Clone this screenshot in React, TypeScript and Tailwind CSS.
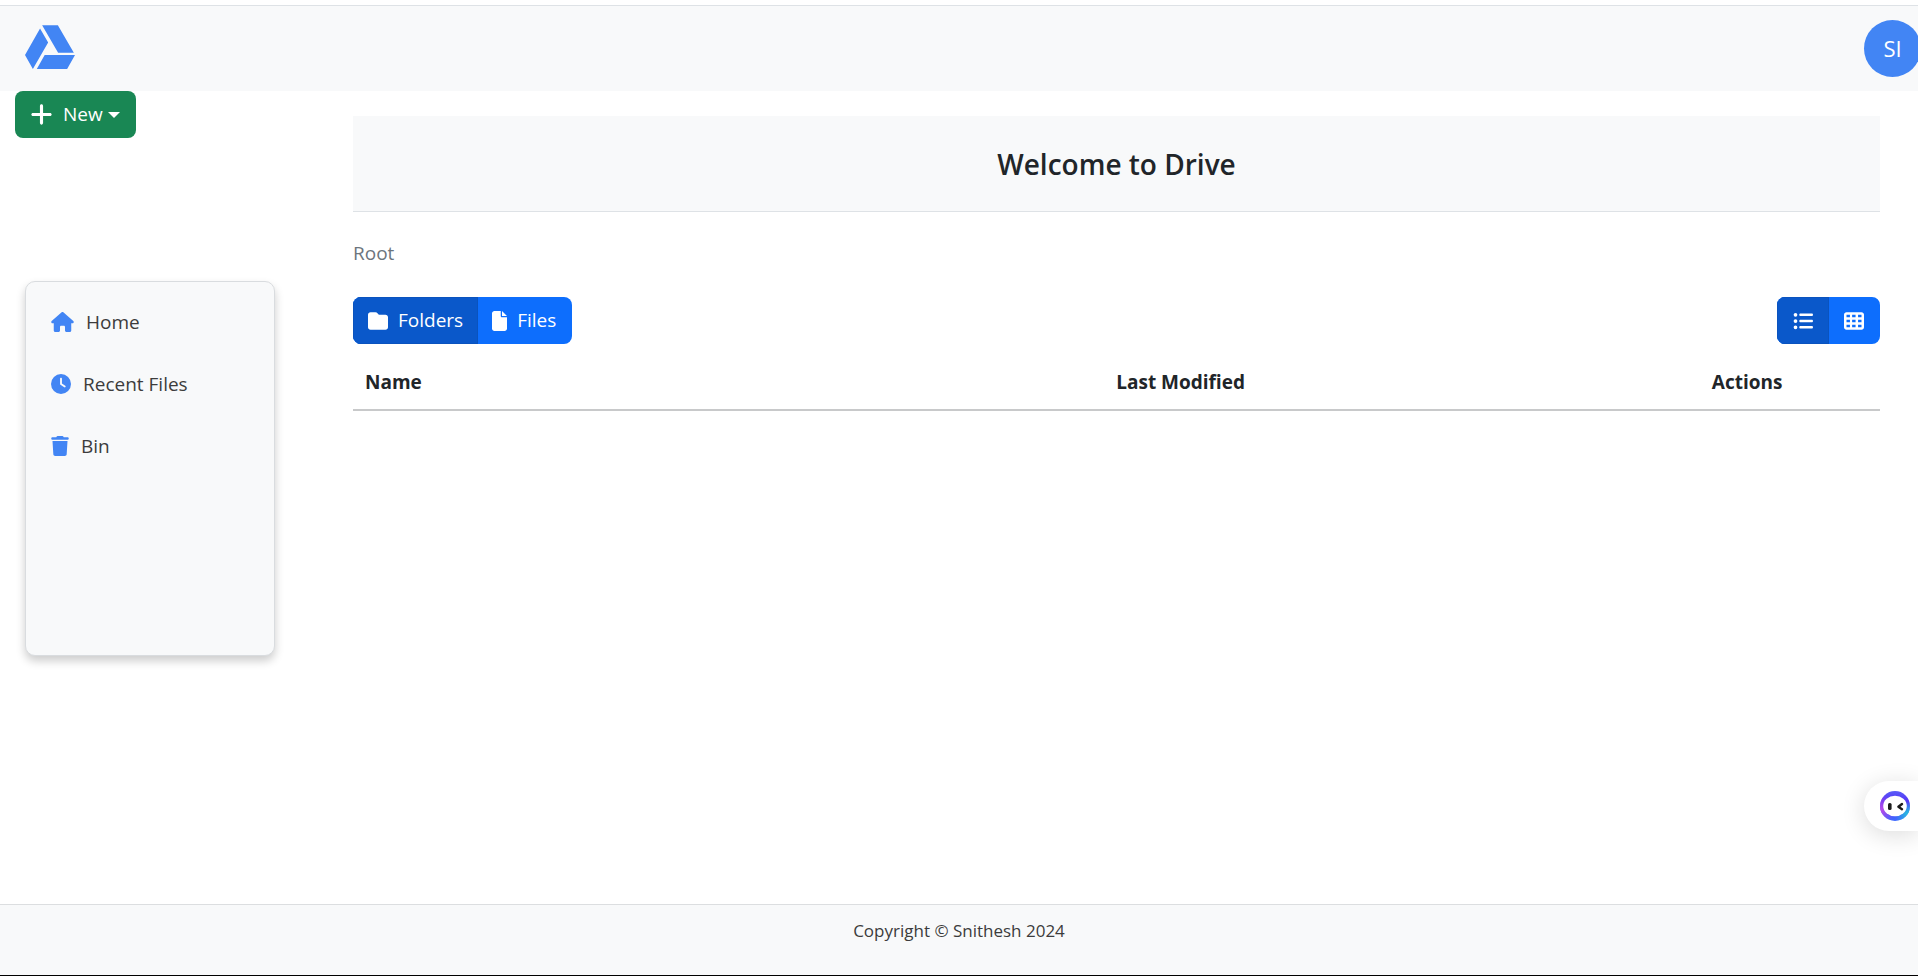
import {
  FaClock,
  FaFile,
  FaFolder,
  FaGoogleDrive,
  FaHouse,
  FaListUl,
  FaPlus,
  FaTableCells,
  FaTrash,
} from "react-icons/fa6";

function Header() {
  return (
    <header className="mt-[5px] flex h-[86px] shrink-0 items-center justify-between border-t border-[#dee2e6] bg-[#f8f9fa] pl-[25px]">
      <a href="#" aria-label="Drive" className="pb-1">
        <FaGoogleDrive className="size-[50px] text-[#4285f4]" />
      </a>
      <button
        type="button"
        className="-mr-[3px] flex size-[57px] items-center justify-center rounded-full bg-[#4285f4] text-[22px] text-white"
      >
        SI
      </button>
    </header>
  );
}

const links = [
  { label: "Home", Icon: FaHouse, size: "h-5 w-[23px]" },
  { label: "Recent Files", Icon: FaClock, size: "h-5 w-5" },
  { label: "Bin", Icon: FaTrash, size: "h-5 w-[18px]" },
];

function Sidebar() {
  return (
    <aside className="w-[300px] shrink-0">
      <button
        type="button"
        className="ml-[15px] flex h-[47px] w-[121px] items-center rounded-lg bg-[#198754] pl-[14px] text-[19px] text-white"
      >
        <FaPlus className="mr-[9px] size-[25px] shrink-0" />
        New
        <span className="ml-[5px] border-x-[6px] border-t-[6px] border-x-transparent border-t-white" />
      </button>
      <nav className="mt-[143px] ml-[25px] h-[375px] w-[250px] rounded-[10px] border border-[#d9dcdf] bg-[#f8f9fa] pt-[9px] shadow-[0_5px_10px_rgba(0,0,0,0.2)]">
        <ul>
          {links.map(({ label, Icon, size }) => (
            <li key={label}>
              <a
                href="#"
                className="flex h-[62px] items-center gap-3 pl-[25px] text-[19px] text-[#3c3c3c]"
              >
                <Icon className={`${size} text-[#4285f4]`} />
                {label}
              </a>
            </li>
          ))}
        </ul>
      </nav>
    </aside>
  );
}

function Content() {
  return (
    <main className="mr-[38px] ml-[53px] flex-1 pt-[25px]">
      <h1 className="flex h-24 items-center justify-center border-b border-[#dee2e6] bg-[#f8f9fa] text-[28px] font-semibold text-[#212529]">
        Welcome to Drive
      </h1>
      <p className="mt-[26px] text-[19px] leading-[30px] text-[#6c757d]">Root</p>
      <div className="mt-[29px] flex justify-between">
        <div className="flex h-[47px] overflow-hidden rounded-lg bg-[#0d6efd] text-[19px] text-white">
          <button
            type="button"
            className="flex items-center gap-[10px] border border-[#0a53be] bg-[#0a58ca] px-[14px]"
          >
            <FaFolder className="size-5" />
            Folders
          </button>
          <button type="button" className="flex items-center gap-[10px] pr-4 pl-[14px]">
            <FaFile className="h-5 w-[15px]" />
            Files
          </button>
        </div>
        <div className="flex h-[47px] overflow-hidden rounded-lg bg-[#0d6efd] text-white">
          <button
            type="button"
            aria-label="List view"
            className="flex w-[52px] items-center justify-center border border-[#0a53be] bg-[#0a58ca]"
          >
            <FaListUl className="size-5" />
          </button>
          <button
            type="button"
            aria-label="Grid view"
            className="flex w-[51px] items-center pl-[15px]"
          >
            <FaTableCells className="size-5" />
          </button>
        </div>
      </div>
      <table className="mt-[15px] w-full table-fixed text-left text-[19px] leading-[30px] text-[#212529]">
        <thead>
          <tr className="border-b-2 border-[#c8c9ca]">
            <th className="w-[49.2%] px-3 pt-2 pb-3">Name</th>
            <th className="w-[39%] px-3 pt-2 pb-3">Last Modified</th>
            <th className="px-3 pt-2 pb-3">Actions</th>
          </tr>
        </thead>
      </table>
    </main>
  );
}

function Assistant() {
  return (
    <button
      type="button"
      aria-label="Assistant"
      className="fixed right-0 bottom-[145px] flex h-[50px] w-[54px] items-center rounded-l-full bg-white pl-4 shadow-[0_4px_24px_rgba(0,0,0,0.14)]"
    >
      <svg viewBox="0 0 30 30" className="size-[30px]">
        <defs>
          <linearGradient id="ring" x1="0.5" y1="0" x2="0.5" y2="1">
            <stop offset="0" stopColor="#5a5cf8" />
            <stop offset="0.35" stopColor="#5433f5" />
            <stop offset="1" stopColor="#3f6bff" />
          </linearGradient>
          <radialGradient id="pink" cx="0.02" cy="0.62" r="0.5">
            <stop offset="0" stopColor="#c04be8" />
            <stop offset="1" stopColor="#c04be8" stopOpacity="0" />
          </radialGradient>
          <radialGradient id="cyan" cx="0.95" cy="0.78" r="0.45">
            <stop offset="0" stopColor="#22c8dc" />
            <stop offset="1" stopColor="#22c8dc" stopOpacity="0" />
          </radialGradient>
        </defs>
        <circle cx="15" cy="15" r="15" fill="url(#ring)" />
        <circle cx="15" cy="15" r="15" fill="url(#pink)" />
        <circle cx="15" cy="15" r="15" fill="url(#cyan)" />
        <ellipse cx="15" cy="15" rx="11.8" ry="10.3" fill="#fff" />
        <rect x="8" y="12" width="3.6" height="7" rx="1.6" fill="#1c1c1c" />
        <path
          d="M22 13l-3.6 2.8 3.6 2.4"
          fill="none"
          stroke="#1c1c1c"
          strokeWidth="2.4"
          strokeLinecap="round"
          strokeLinejoin="round"
        />
      </svg>
    </button>
  );
}

export default function App() {
  return (
    <div className="flex min-h-screen flex-col overflow-x-hidden bg-white font-['Open_Sans','Noto_Sans',sans-serif]">
      <Header />
      <div className="flex flex-1">
        <Sidebar />
        <Content />
      </div>
      <footer className="h-[72px] shrink-0 border-t border-b border-t-[#dcdee0] border-b-black bg-[#f8f9fa] pt-3 text-center text-[17px] leading-7 text-[#3c3c3c]">
        Copyright © Snithesh 2024
      </footer>
      <Assistant />
    </div>
  );
}
